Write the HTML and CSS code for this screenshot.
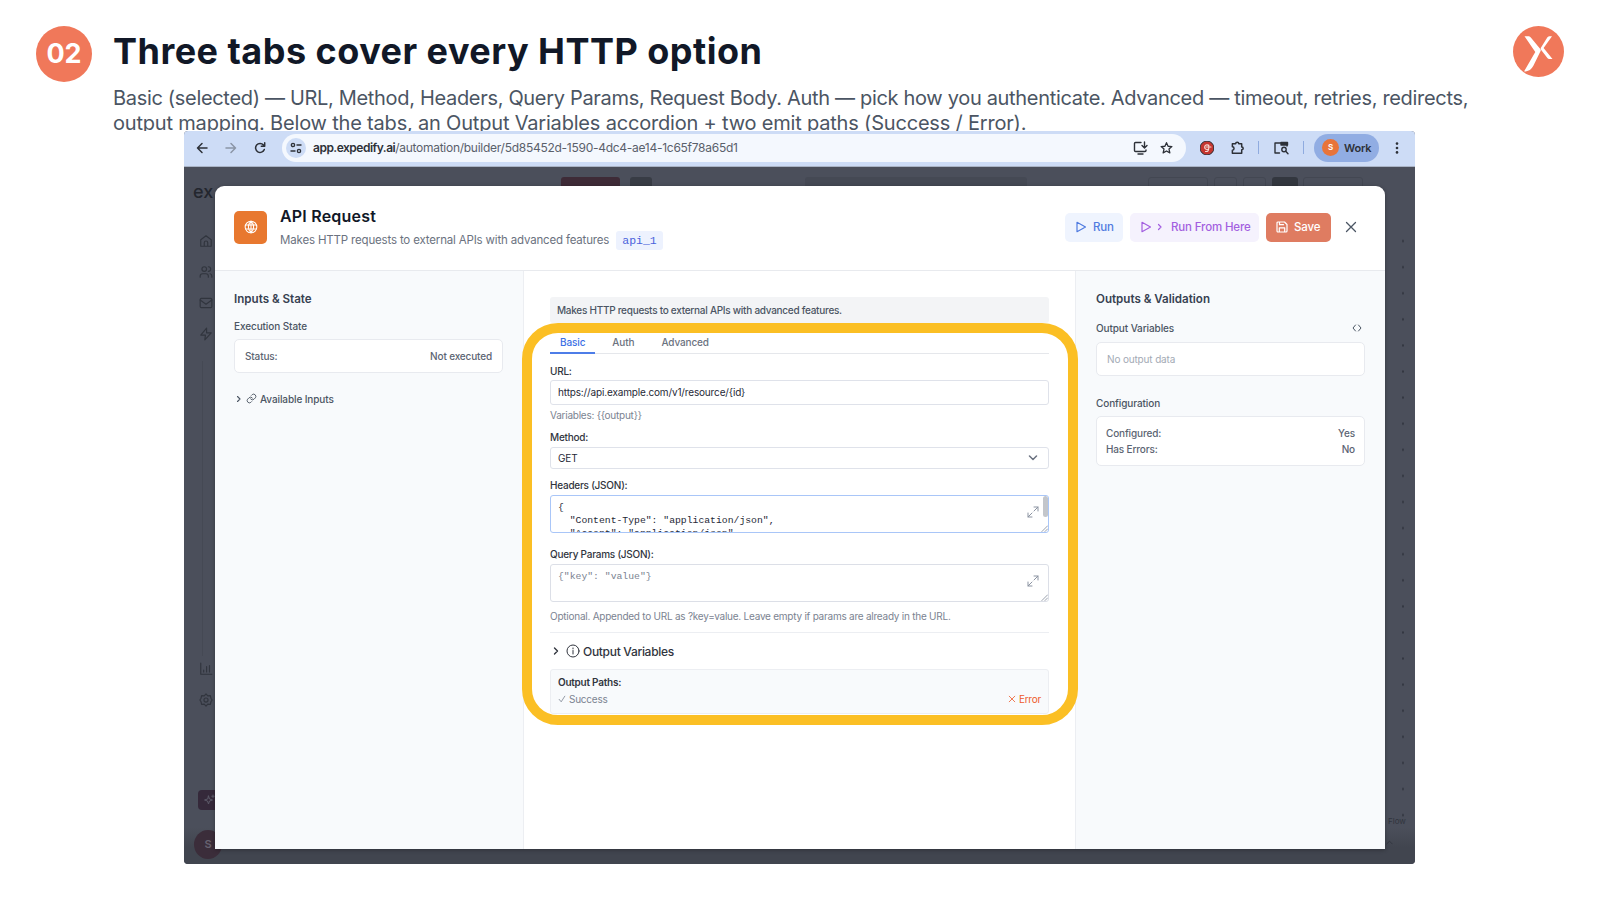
FILE: index.html
```
<!DOCTYPE html>
<html lang="en">
<head>
    <meta charset="UTF-8">
    <meta name="viewport" content="width=device-width, initial-scale=1.0">
    <title>Three tabs cover every HTTP option</title>
    <link rel="stylesheet" href="styles.css">
</head>
<body>
    <header class="slide-header">
        <div class="step">02</div>
        <div class="slide-text">
            <h1>Three tabs cover every HTTP option</h1>
            <p><span class="line-one">Basic (selected) — URL, Method, Headers, Query Params, Request Body. Auth — pick how you authenticate. Advanced — timeout, retries, redirects,</span><br>output mapping. Below the tabs, an Output Variables accordion + two emit paths (Success / Error).</p>
        </div>
        <svg class="brand" viewBox="0 0 51 51">
            <circle cx="25.5" cy="25.5" r="25.5" fill="#f0785a"/>
            <path d="M11.500 10.300H15c1.600 0 2.400.5 3.200 1.700l9.300 11.200c.4.600.4 1.200.1 1.800L20.500 39.500c-2 3.800-4.500 6-9.500 6L22.300 26z" fill="#fff"/>
            <path d="M39 10.300h-2c-1.500 0-2.300.6-3.200 1.900L27.600 22.300l.6 1.800 6.200 8c.7.800 1.300 1 2.200 1h2.900l-8.900-11z" fill="#fff"/>
        </svg>
    </header>

    <div class="browser">
        <div class="toolbar">
            <svg class="nav" viewBox="0 0 12 12"><path d="M11 6H1.500M6 1.500L1.500 6 6 10.500"/></svg>
            <svg class="nav muted" viewBox="0 0 12 12"><path d="M1 6h9.500M6 1.500L10.500 6 6 10.500"/></svg>
            <svg class="nav" viewBox="0 0 12 12"><path d="M10.300 7.500A4.500 4.500 0 1 1 9.500 3M10.700.8v3.400H7.300"/></svg>
            <div class="address">
                <div class="site-info">
                    <svg viewBox="0 0 12 12"><path d="M7 3h4M1 9h4"/><circle cx="3" cy="3" r="1.600"/><circle cx="9" cy="9" r="1.600"/></svg>
                </div>
                <div class="url"><b>app.expedify.ai</b>/automation/builder/5d85452d-1590-4dc4-ae14-1c65f78a65d1</div>
                <svg class="tool install" viewBox="0 0 15 14"><path d="M8 1.500H2.500a1 1 0 0 0-1 1v7a1 1 0 0 0 1 1h9.500a1 1 0 0 0 1-1V9M5 13h5M11.500 1v5.500M9 4.500L11.500 7 14 4.500"/></svg>
                <svg class="tool star" viewBox="0 0 14 14"><path d="M7 1.300l1.700 3.800 4.100.4-3.100 2.700.9 4.100L7 10.200l-3.600 2.100.9-4.100-3.100-2.700 4.100-.4z"/></svg>
            </div>
            <svg class="ext" viewBox="0 0 14 14"><circle cx="7" cy="7" r="7" fill="#c5362f"/><path d="M8.800 4.800A2.300 2.300 0 1 0 8.800 7.500V4M8.800 7c0 3-1.300 3.800-3.300 3.500M6 6h5" fill="none" stroke="#f6d9d2" stroke-width="1.100"/></svg>
            <svg class="tool puzzle" viewBox="0 0 15 15"><path d="M2 3h3.500a1.700 1.700 0 0 1 3.400 0H12v3.300a1.600 1.600 0 0 1 0 3.200V13H2V9.800a1.800 1.800 0 0 0 0-3.600z"/></svg>
            <i class="sep"></i>
            <svg class="tool search-tab" viewBox="0 0 16 14"><path d="M6.500 12H2V2h12v3"/><path d="M8 1.500h6.500V4H8z" fill="#2d3138"/><circle cx="11" cy="8.500" r="2.200"/><path d="M12.700 10.200l2.300 2.500"/></svg>
            <i class="sep"></i>
            <div class="profile"><span class="face">S</span>Work</div>
            <svg class="kebab" viewBox="0 0 4 12"><circle cx="2" cy="1.600" r="1.300"/><circle cx="2" cy="6" r="1.300"/><circle cx="2" cy="10.400" r="1.300"/></svg>
        </div>

        <div class="app">
            <div class="topbar">
                <span class="logo">ex</span>
                <i class="ghost red"></i><i class="ghost green"></i>
                <i class="ghost wide"></i><i class="ghost box"></i><i class="ghost box small"></i><i class="ghost box small"></i><i class="ghost dark"></i><i class="ghost box"></i>
            </div>
            <nav class="sidebar">
                <svg viewBox="0 0 24 24"><path d="M3 10l9-7 9 7v11H3zM9 21v-6a3 3 0 0 1 6 0v6"/></svg>
                <svg viewBox="0 0 24 24"><circle cx="9" cy="7" r="4"/><path d="M2 21v-2a4 4 0 0 1 4-4h6a4 4 0 0 1 4 4v2M16 3a4 4 0 0 1 0 8M22 21v-2a4 4 0 0 0-3-4"/></svg>
                <svg viewBox="0 0 24 24"><rect x="2" y="4" width="20" height="16" rx="2"/><path d="M2 7l10 7 10-7"/></svg>
                <svg viewBox="0 0 24 24"><path d="M13 2L3 14h8l-1 8 11-12h-8z"/></svg>
                <i class="rail"></i>
                <svg viewBox="0 0 24 24"><path d="M3 2v19h19M8 17v-3M13 17V8M18 17V6"/></svg>
                <svg viewBox="0 0 24 24"><path d="M12 1.500l3 3.500 4.500-.5 1 4.500 2 3-2 3-1 4.500-4.500-.5-3 3.500-3-3.500-4.500.5-1-4.500-2-3 2-3 1-4.500L9 5z"/><circle cx="12" cy="12" r="3.500"/></svg>
                <div class="assistant"><svg viewBox="0 0 24 24"><path d="M11 4l2 6 6 2-6 2-2 6-2-6-6-2 6-2zM20 2v5M17.500 4.500h5"/></svg></div>
                <div class="avatar">S</div>
            </nav>
            <div class="canvas-edge">
                <div class="dots"></div>
                <span class="flow">Flow</span>
                <svg class="caret" viewBox="0 0 8 5"><path d="M1 4l3-3 3 3"/></svg>
            </div>

            <div class="modal">
                <div class="modal-header">
                    <div class="node-icon"><svg viewBox="0 0 24 24"><circle cx="12" cy="12" r="10"/><path d="M12 2c-6 6-6 14 0 20M12 2c6 6 6 14 0 20M3 8.500h18M3 15.500h18M12 2v20"/></svg></div>
                    <div class="node-text">
                        <h2>API Request</h2>
                        <div class="node-sub">Makes HTTP requests to external APIs with advanced features<code>api_1</code></div>
                    </div>
                    <button class="btn run"><svg viewBox="0 0 12 12"><path d="M2 1.300L10.500 6 2 10.700z"/></svg>Run</button>
                    <button class="btn from"><svg viewBox="0 0 12 12"><path d="M2 1.300L10.500 6 2 10.700z"/></svg><svg class="chev" viewBox="0 0 6 10"><path d="M1.500 2.500L4 5 1.500 7.500"/></svg>Run From Here</button>
                    <button class="btn save"><svg viewBox="0 0 12 12"><path d="M1 2a1 1 0 0 1 1-1h6.500L11 3.500V10a1 1 0 0 1-1 1H2a1 1 0 0 1-1-1zM3.300 11V6.800h5.400V11M3.500 1v2.700h4"/></svg>Save</button>
                    <svg class="close" viewBox="0 0 12 12"><path d="M1.500 1.500l9 9M10.500 1.500l-9 9"/></svg>
                </div>
                <div class="modal-body">
                    <aside class="panel left">
                        <h3>Inputs &amp; State</h3>
                        <h4>Execution State</h4>
                        <div class="card single"><span>Status:</span><span>Not executed</span></div>
                        <div class="available">
                            <svg class="chev" viewBox="0 0 6 10"><path d="M1.500 2.500L4 5 1.500 7.500"/></svg>
                            <svg class="link" viewBox="0 0 24 24"><path d="M10 13a5 5 0 0 0 7.500.5l3-3a5 5 0 0 0-7-7l-1.700 1.700M14 11a5 5 0 0 0-7.500-.5l-3 3a5 5 0 0 0 7 7l1.700-1.700"/></svg>
                            <span>Available Inputs</span>
                        </div>
                    </aside>

                    <main class="form">
                        <div class="desc">Makes HTTP requests to external APIs with advanced features.</div>
                        <div class="tabs">
                            <div class="tab active">Basic</div>
                            <div class="tab">Auth</div>
                            <div class="tab">Advanced</div>
                        </div>
                        <label class="url-label">URL:</label>
                        <div class="input">https://api.example.com/v1/resource/{id}</div>
                        <div class="hint vars">Variables: {{output}}</div>
                        <label class="method-label">Method:</label>
                        <div class="input select">GET<svg viewBox="0 0 10 6"><path d="M1.500 1L5 4.500 8.500 1"/></svg></div>
                        <label class="headers-label">Headers (JSON):</label>
                        <div class="area focus">
                            <pre>{
  "Content-Type": "application/json",
  "Accept": "application/json"
}</pre>
                            <svg class="expand" viewBox="0 0 12 12"><path d="M7 1h4v4M11 1L7 5M5 11H1V7M1 11l4-4"/></svg>
                            <i class="thumb"></i>
                            <svg class="grip" viewBox="0 0 8 8"><path d="M1 7.500L7.500 1M4.500 7.500l3-3"/></svg>
                        </div>
                        <label class="query-label">Query Params (JSON):</label>
                        <div class="area empty">
                            <pre>{"key": "value"}</pre>
                            <svg class="expand" viewBox="0 0 12 12"><path d="M7 1h4v4M11 1L7 5M5 11H1V7M1 11l4-4"/></svg>
                            <svg class="grip" viewBox="0 0 8 8"><path d="M1 7.500L7.500 1M4.500 7.500l3-3"/></svg>
                        </div>
                        <div class="hint optional">Optional. Appended to URL as ?key=value. Leave empty if params are already in the URL.</div>
                        <div class="accordion">
                            <svg class="chev" viewBox="0 0 6 10"><path d="M1.500 2L4.500 5 1.500 8"/></svg>
                            <svg class="info" viewBox="0 0 14 14"><circle cx="7" cy="7" r="6"/><path d="M7 6.500V10M7 4v.9"/></svg>
                            <span>Output Variables</span>
                        </div>
                        <div class="paths">
                            <b>Output Paths:</b>
                            <div class="path-row">
                                <svg viewBox="0 0 10 10"><path d="M1.500 5.500L4 8.500 8.500 1.500"/></svg><span class="ok">Success</span>
                                <svg class="bad" viewBox="0 0 10 10"><path d="M1.500 1.500l7 7M8.500 1.500l-7 7"/></svg><span class="bad">Error</span>
                            </div>
                        </div>
                    </main>

                    <aside class="panel right">
                        <h3>Outputs &amp; Validation</h3>
                        <h4>Output Variables<svg viewBox="0 0 10 8"><path d="M3.500 1L1 4l2.500 3M6.500 1L9 4 6.500 7"/></svg></h4>
                        <div class="card single none">No output data</div>
                        <h4 class="config">Configuration</h4>
                        <div class="card double">
                            <div><span>Configured:</span><span>Yes</span></div>
                            <div><span>Has Errors:</span><span>No</span></div>
                        </div>
                    </aside>
                </div>
            </div>
        </div>
        <div class="highlight"></div>
    </div>
</body>
</html>
```
FILE: styles.css
```
* {
    box-sizing: border-box;
}
body {
    margin: 0;
    width: 1600px;
    height: 900px;
    overflow: hidden;
    background: #fff;
    font-family: Inter, "Liberation Sans", sans-serif;
    color: #374151;
}
svg {
    display: block;
    flex: none;
    fill: none;
    stroke: currentColor;
    stroke-linecap: round;
    stroke-linejoin: round;
}
h1, h2, h3, h4, p, pre {
    margin: 0;
}

/* slide header */
.slide-header {
    display: flex;
    align-items: flex-start;
    height: 131px;
    padding: 26px 36px 0 36px;
    overflow: hidden;
}
.step {
    width: 56px;
    height: 56px;
    margin-right: 21px;
    border-radius: 50%;
    background: #f0785a;
    color: #fff;
    font-size: 27px;
    font-weight: 700;
    line-height: 56px;
    text-align: center;
}
.slide-text {
    flex: 1;
    white-space: nowrap;
}
h1 {
    font-size: 36px;
    line-height: 44px;
    font-weight: 700;
    letter-spacing: 0.48px;
    margin-top: 3px;
    color: #111827;
}
.slide-text p {
    font-size: 20px;
    line-height: 25px;
    letter-spacing: -0.19px;
    margin-top: 13px;
    color: #4b5563;
}
.line-one {
    letter-spacing: -0.32px;
}
.brand {
    width: 51px;
    height: 51px;
    stroke: none;
}

/* browser frame */
.browser {
    position: relative;
    width: 1231px;
    height: 733px;
    margin: 0 0 0 184px;
    border-radius: 4px;
    overflow: hidden;
    background: #4b4f5b;
}
.toolbar {
    display: flex;
    align-items: center;
    height: 36px;
    padding: 0 16px 2px 12px;
    background: #cddcf6;
    border-bottom: 1px solid #aab4c6;
    color: #2d3138;
}
.nav {
    width: 12px;
    height: 12px;
    margin-right: 17px;
    stroke-width: 1.5;
}
.muted {
    color: #8b95a6;
}
.address {
    display: flex;
    align-items: center;
    width: 905px;
    height: 28px;
    margin-right: 14px;
    margin-left: -1px;
    padding: 0 13px 0 4px;
    border-radius: 14px;
    background: #f4f8fe;
}
.site-info {
    width: 20px;
    height: 20px;
    padding: 4px;
    margin-right: 7px;
    border-radius: 50%;
    background: #cddcf6;
}
.site-info svg {
    stroke-width: 1.4;
}
.url {
    flex: 1;
    font-size: 12px;
    letter-spacing: -0.27px;
    color: #5a606b;
}
.url b {
    font-weight: 600;
    letter-spacing: -0.5px;
    color: #2d3138;
}
.tool {
    height: 14px;
    stroke-width: 1.4;
}
.install {
    width: 15px;
    margin-right: 12px;
}
.star {
    width: 13px;
}
.ext {
    width: 14px;
    height: 14px;
    margin-right: 16px;
}
.puzzle {
    width: 15px;
    margin-right: 13px;
    stroke-width: 1.6;
}
.sep {
    width: 1px;
    height: 13px;
    background: #8fabdf;
    margin-right: 14px;
}
.search-tab {
    width: 16px;
    margin-right: 14px;
}
.sep + .profile {
    margin-left: -4px;
}
.profile {
    display: flex;
    align-items: center;
    width: 65px;
    height: 28px;
    padding-left: 8px;
    border-radius: 14px;
    background: #91ade3;
    margin-right: 16px;
    font-size: 11px;
    font-weight: 600;
    letter-spacing: -0.2px;
}
.face {
    width: 17px;
    height: 17px;
    margin-right: 5px;
    border-radius: 50%;
    background: #e8743a;
    color: #fff;
    font-size: 8px;
    line-height: 17px;
    text-align: center;
}
.kebab {
    width: 4px;
    height: 12px;
    fill: #2d3138;
    stroke: none;
}

/* dimmed application behind the dialog */
.app {
    position: relative;
    display: grid;
    grid-template: 50px 1fr / 30px 1fr 30px;
    height: 697px;
    background: linear-gradient(#4b4f5b 660px, #41454f 680px);
    color: #31353e;
}
.topbar {
    grid-column: 1 / 4;
    display: flex;
    padding: 10px 0 0 9px;
}
.logo {
    width: 368px;
    margin-top: 4px;
    font-size: 18px;
    font-weight: 500;
    line-height: 22px;
    color: #23262e;
}
.ghost {
    flex: none;
    height: 14px;
    border-radius: 3px;
}
.red {
    width: 59px;
    margin-right: 10px;
    background: #3e2b37;
}
.green {
    width: 22px;
    margin-right: 153px;
    background: #383c45;
}
.wide {
    width: 222px;
    margin-right: 121px;
    background: #454954;
}
.box {
    width: 60px;
    margin-right: 6px;
    border: 1px solid #434752;
}
.small {
    width: 23px;
}
.dark {
    width: 26px;
    margin-right: 5px;
    background: #33373f;
}
.sidebar {
    display: flex;
    flex-direction: column;
    padding: 17px 0 5px 15px;
}
.sidebar > svg {
    width: 14px;
    height: 14px;
    margin-bottom: 17px;
    stroke-width: 2;
}
.rail {
    width: 1px;
    height: 295px;
    margin: 3px 0 6px 3px;
    background: #454954;
}
.assistant {
    width: 30px;
    height: 20px;
    margin: 66px 0 20px -1px;
    padding: 4px 9px 0 5px;
    border-radius: 4px;
    background: #35293a;
}
.assistant svg {
    width: 12px;
    height: 12px;
    color: #5c5a69;
    stroke-width: 2;
}
.avatar {
    width: 28px;
    height: 29px;
    margin-left: -5px;
    border-radius: 50%;
    background: #3b2d3a;
    color: #676270;
    font-size: 11px;
    font-weight: 600;
    line-height: 29px;
    text-align: center;
}
.canvas-edge {
    grid-column: 3;
    display: flex;
    flex-direction: column;
    font-size: 8px;
}
.dots {
    width: 2px;
    height: 592px;
    margin: 11px 0 0 17px;
    background: radial-gradient(circle, #333741 1px, transparent 1.2px) 0 0 / 2px 26.1px;
}
.flow {
    margin: -4px 0 0 3px;
}
.caret {
    width: 7px;
    height: 5px;
    margin: 14px 0 0 1px;
}

/* dialog */
.modal {
    position: absolute;
    left: 31px;
    top: 18.500px;
    width: 1170px;
    height: 663px;
    display: flex;
    flex-direction: column;
    border-radius: 9px 9px 0 0;
    overflow: hidden;
    background: #fff;
    box-shadow: 0 1px 4px rgba(0, 0, 0, 0.3);
}
.modal-header {
    display: flex;
    align-items: flex-start;
    height: 85px;
    padding: 25px 28px 0 19px;
    border-bottom: 1px solid #e8eaee;
}
.node-icon {
    width: 33px;
    height: 33px;
    margin-right: 13px;
    padding: 9.500px;
    border-radius: 5px;
    background: #e8782f;
    color: #fff;
}
.node-icon svg {
    stroke-width: 1.8;
}
.node-text {
    flex: 1;
    white-space: nowrap;
}
h2 {
    margin-top: -6px;
    font-size: 16px;
    line-height: 22px;
    font-weight: 600;
    letter-spacing: 0.2px;
    color: #111827;
}
.node-sub {
    display: flex;
    align-items: center;
    margin-top: 4px;
    font-size: 11.500px;
    letter-spacing: -0.17px;
    line-height: 19px;
    color: #6b7280;
}
code {
    margin-left: 7px;
    padding: 0 6px;
    border-radius: 3px;
    background: #edf2fe;
    color: #4a62dc;
    font: 11.500px/19px "Liberation Mono", monospace;
    letter-spacing: 0;
}
.btn {
    display: flex;
    align-items: center;
    height: 29px;
    margin: 2px 7px 0 0;
    padding: 0 0 0 10px;
    border: 0;
    border-radius: 5px;
    font: 500 11.500px Inter, sans-serif;
    letter-spacing: -0.15px;
    white-space: nowrap;
}
.btn svg {
    width: 12px;
    height: 12px;
    margin-right: 6px;
    stroke-width: 1.2;
}
.run {
    width: 58px;
    background: #eff4fe;
    color: #4f7be0;
}
.from {
    width: 129px;
    background: #f5f2fd;
    color: #a35fe0;
}
.btn .chev {
    width: 6px;
    height: 10px;
    margin: 0 8px 0 -1px;
}
.save {
    width: 65px;
    background: #df7c61;
    color: #fff;
}
.close {
    width: 12px;
    height: 12px;
    margin: 10.500px 0 0 7px;
    color: #4b5563;
    stroke-width: 1.3;
}
.modal-body {
    display: flex;
    flex: 1;
}
.panel {
    background: #f8fafc;
    font-size: 10px;
}
.left {
    width: 309px;
    padding: 19px 20px 0 19px;
    border-right: 1px solid #eceef2;
}
.right {
    width: 310px;
    padding: 19px 20px 0 20px;
    border-left: 1px solid #eceef2;
}
h3 {
    font-size: 11.600px;
    font-weight: 600;
    line-height: 18px;
    color: #374151;
}
h4 {
    display: flex;
    align-items: center;
    justify-content: space-between;
    margin-top: 9px;
    font-size: 10px;
    font-weight: 500;
    letter-spacing: -0.1px;
    line-height: 18px;
    color: #4b5563;
}
h4 svg {
    width: 10px;
    height: 8px;
    margin-right: 3px;
}
.right h4 {
    margin-top: 11px;
}
.card {
    border: 1px solid #e8eaef;
    border-radius: 5px;
    background: #fff;
    color: #5b6472;
    font-weight: 500;
    letter-spacing: -0.15px;
}
.single {
    display: flex;
    justify-content: space-between;
    align-items: center;
    height: 34px;
    margin-top: 4px;
    padding: 0 10px;
}
.right .single {
    margin-top: 5px;
}
.none {
    color: #a3aab5;
    font-weight: 400;
}
.right .config {
    margin-top: 18px;
}
.double {
    height: 50px;
    margin-top: 4px;
    padding: 8px 9px;
}
.double div {
    display: flex;
    justify-content: space-between;
    line-height: 16.500px;
}
.chev {
    width: 6px;
    height: 10px;
    stroke-width: 1.1;
}
.available {
    display: flex;
    align-items: center;
    height: 18px;
    margin-top: 17px;
    padding-left: 2px;
    font-weight: 500;
    letter-spacing: -0.1px;
    color: #4b5563;
}
.link {
    width: 11px;
    height: 11px;
    margin: 0 3px 0 4px;
    stroke-width: 2;
}

/* form column */
.form {
    width: 551px;
    padding: 26px 26px 0 26px;
    font-size: 10px;
    letter-spacing: -0.24px;
    white-space: nowrap;
}
.form > label {
    display: block;
    height: 14px;
    line-height: 14px;
    font-weight: 500;
}
.desc {
    height: 26px;
    padding-left: 7px;
    border-radius: 3px;
    background: #f3f4f6;
    line-height: 26px;
    letter-spacing: -0.27px;
    color: #4b5563;
    font-weight: 500;
}
.tabs {
    display: flex;
    height: 31px;
    border-bottom: 1px solid #e5e7eb;
    line-height: 38px;
    font-weight: 500;
    letter-spacing: -0.12px;
    color: #6b7280;
}
.tab {
    height: 31px;
    padding: 0 10px;
    margin-right: 7px;
}
.active {
    border-bottom: 2px solid #4d7de8;
    color: #3b6fe4;
}
.url-label {
    margin-top: 10px;
}
.input {
    display: flex;
    align-items: center;
    justify-content: space-between;
    height: 25px;
    margin-top: 2px;
    padding: 0 10px 0 7px;
    border: 1px solid #dfe2ea;
    border-radius: 3px;
    letter-spacing: -0.15px;
    color: #1f2937;
}
.hint {
    height: 14px;
    line-height: 14px;
    color: #7b8391;
}
.vars {
    margin-top: 3px;
}
.method-label {
    margin-top: 8.500px;
}
.select {
    height: 22px;
    margin-top: 3px;
}
.select svg {
    width: 10px;
    height: 6px;
    color: #6b7280;
    stroke-width: 1.5;
}
.headers-label {
    margin-top: 9px;
}
.area {
    position: relative;
    height: 38px;
    margin-top: 2.500px;
    padding: 5px 7px 0;
    border: 1px solid #dcdfe7;
    border-radius: 3px;
    overflow: hidden;
}
.area pre {
    font: 9.750px/13px "Liberation Mono", monospace;
    letter-spacing: 0;
    color: #1f2937;
}
.focus {
    border-color: #a9c6f8;
}
.area.empty {
    margin-top: 3px;
}
.empty pre {
    color: #7b8391;
}
.expand {
    position: absolute;
    right: 9px;
    top: 10px;
    width: 12px;
    height: 12px;
    color: #8b93a1;
}
.thumb {
    position: absolute;
    right: 0;
    top: 0;
    width: 5px;
    height: 21px;
    border-radius: 3px;
    background: #c3c6cb;
}
.grip {
    position: absolute;
    right: 0;
    bottom: 0;
    width: 7px;
    height: 7px;
    color: #8b93a1;
}
.query-label {
    margin-top: 14px;
}
.optional {
    margin-top: 7.500px;
}
.accordion {
    display: flex;
    align-items: center;
    height: 37px;
    margin-top: 9px;
    padding-left: 3px;
    border-top: 1px solid #eceef2;
    font-size: 12px;
    font-weight: 500;
    letter-spacing: -0.3px;
}
.accordion .chev {
    stroke-width: 1.4;
}
.info {
    width: 14px;
    height: 14px;
    margin: 0 3px 0 7px;
}
.paths {
    height: 45px;
    padding: 4px 7px;
    border: 1px solid #eceef2;
    border-radius: 3px;
    background: #f8fafc;
    line-height: 16.500px;
}
.paths b {
    font-weight: 600;
}
.path-row {
    display: flex;
    align-items: center;
    color: #7b8391;
}
.path-row svg {
    width: 8px;
    height: 8px;
    margin-right: 3px;
}
.ok {
    flex: 1;
}
.path-row .bad {
    color: #ee5a2a;
}
.highlight {
    position: absolute;
    left: 338px;
    top: 192px;
    width: 556px;
    height: 402px;
    border: 10px solid #fbbf24;
    border-radius: 36px;
}
```
